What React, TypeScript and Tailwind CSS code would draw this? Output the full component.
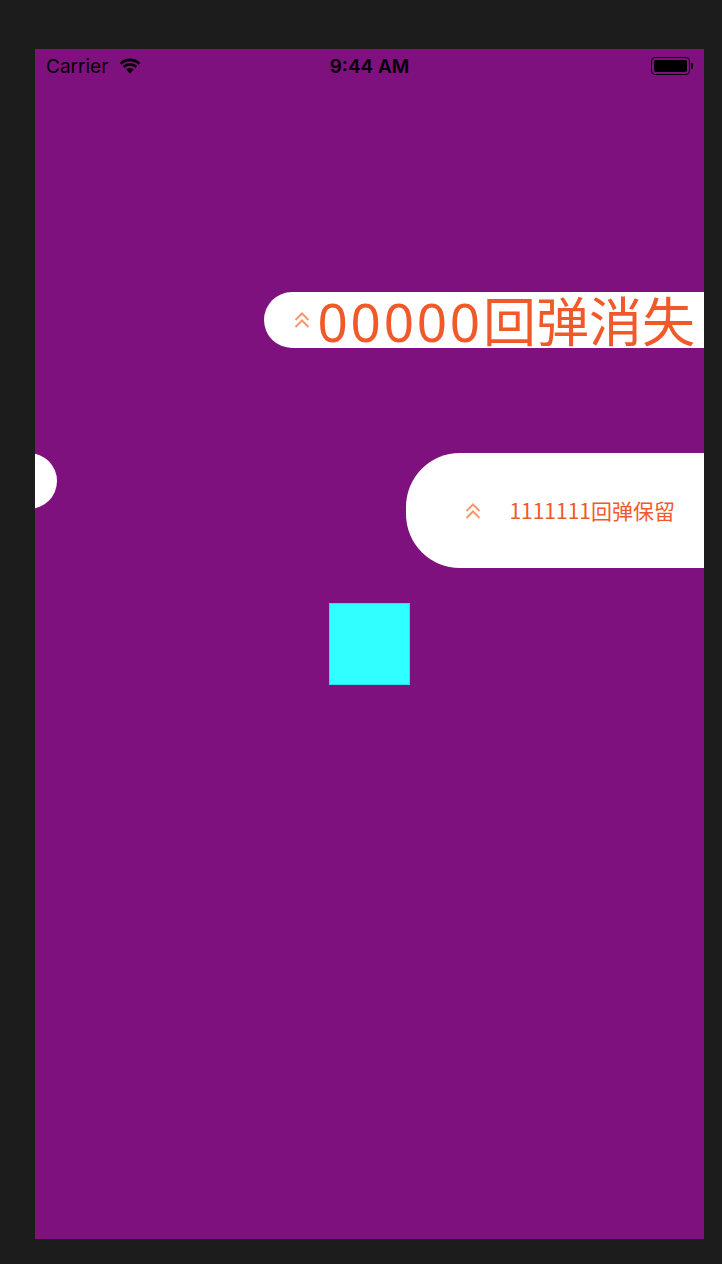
import React from "react";

const ChevronsUp = ({ className = "" }: { className?: string }) => (
  <svg viewBox="0 0 18 18" className={className} fill="none">
    <polyline points="2.5,9 9,2.5 15.5,9" stroke="#f7976f" strokeWidth="2" />
    <polyline points="2.5,16 9,9.5 15.5,16" stroke="#f7976f" strokeWidth="2" />
  </svg>
);

const Wifi = () => (
  <svg viewBox="0 0 22 16" className="w-[22px] h-[16px]">
    <path d="M11 15.5 L7.2 11.6 A5.4 5.4 0 0 1 14.8 11.6 Z" fill="#000" />
    <path d="M4.6 9 A9 9 0 0 1 17.4 9" stroke="#000" strokeWidth="2.6" fill="none" />
    <path d="M1.6 5.8 A13.2 13.2 0 0 1 20.4 5.8" stroke="#000" strokeWidth="2.6" fill="none" />
  </svg>
);

const Battery = () => (
  <div className="flex items-center">
    <div className="w-[39px] h-[18px] rounded-[4px] border-[1.5px] border-black p-[2px]">
      <div className="w-full h-full bg-black rounded-[2px]" />
    </div>
    <div className="w-[2px] h-[6px] bg-black rounded-r-[1px] ml-[1px]" />
  </div>
);

export default function App() {
  return (
    <div className="w-[722px] h-[1264px] bg-[#1c1c1c] pl-[35px] pt-[49px]">
      <div className="w-[669px] h-[1190px] bg-[#7e117d] overflow-hidden flex flex-col">
        {/* status bar */}
        <div className="h-[34px] flex items-center justify-between px-[11px] text-black font-['Inter',sans-serif]">
          <div className="flex items-center gap-[11px] w-[150px]">
            <span className="text-[19px] leading-none">Carrier</span>
            <Wifi />
          </div>
          <span className="text-[19px] font-semibold leading-none">9:44 AM</span>
          <div className="w-[150px] flex justify-end">
            <Battery />
          </div>
        </div>

        <div className="mt-[209px] flex justify-end">
          <div className="h-[56px] bg-white rounded-l-[28px] flex items-center pl-[29px] pr-[9px] gap-[6px] text-[#f05a2a] font-['Noto_Sans_CJK_SC',sans-serif]">
            <ChevronsUp className="w-[18px] h-[18px] shrink-0" />
            <span className="text-[53px] leading-none whitespace-nowrap">
              <span className="font-['Noto_Sans',sans-serif] tracking-[2.8px]">00000</span>回弹消失
            </span>
          </div>
        </div>

        <div className="mt-[105px] flex justify-between items-start">
          <div className="w-[56px] h-[56px] rounded-full bg-white -ml-[34px]" />
          <div className="h-[115px] bg-white rounded-l-[54px] flex items-center pl-[58px] pr-[29px] gap-[27px] text-[#f05a2a] font-['Noto_Sans_CJK_SC',sans-serif]">
            <ChevronsUp className="w-[18px] h-[18px] shrink-0" />
            <span className="text-[21px] leading-none whitespace-nowrap">1111111回弹保留</span>
          </div>
        </div>

        <div className="mt-[35px] ml-[294px] w-[81px] h-[82px] bg-[#30ffff] border border-[#28e0e8]" />
      </div>
    </div>
  );
}
